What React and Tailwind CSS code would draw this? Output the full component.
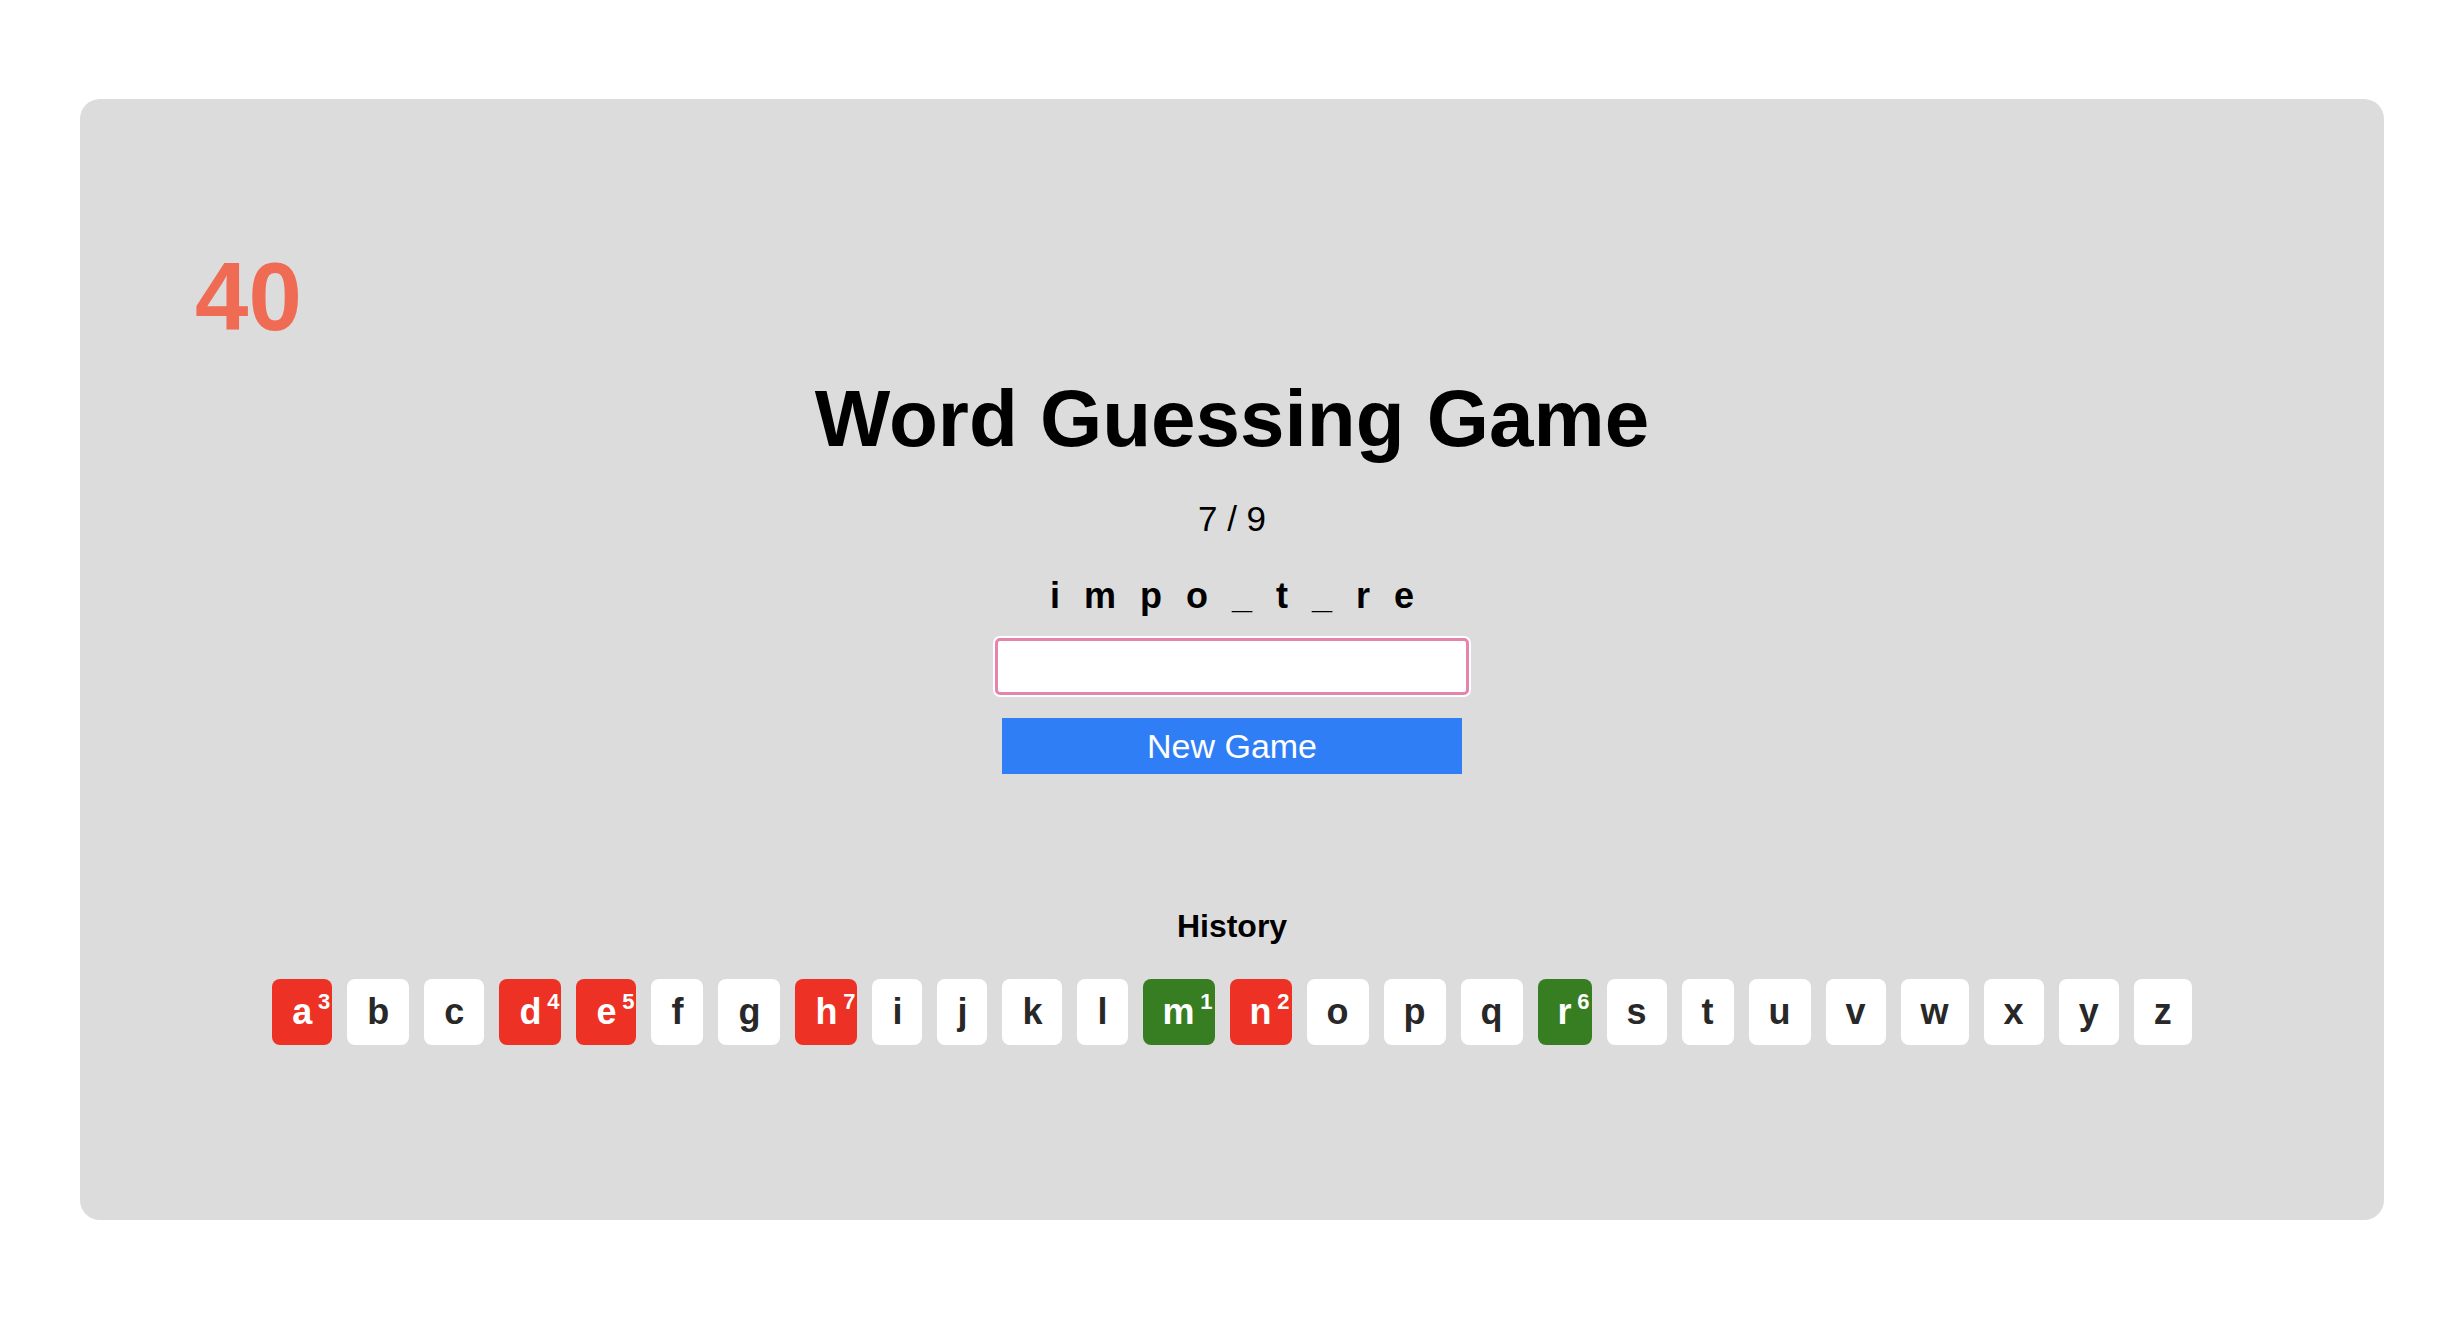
import React from "react";

const WORD = ["i", "m", "p", "o", "_", "t", "_", "r", "e"];

// letter -> [status, order of guess]
const GUESSES = {
  a: ["miss", 3],
  d: ["miss", 4],
  e: ["miss", 5],
  h: ["miss", 7],
  m: ["hit", 1],
  n: ["miss", 2],
  r: ["hit", 6],
};

const ALPHABET = "abcdefghijklmnopqrstuvwxyz".split("");

function LetterTile({ letter }) {
  const guess = GUESSES[letter];
  let tone = "bg-white text-[#282828]";
  if (guess && guess[0] === "miss") tone = "bg-[#ed3124] text-white";
  if (guess && guess[0] === "hit") tone = "bg-[#377e22] text-white";

  return (
    <div className={`relative rounded-lg px-5 py-3 text-[36px] leading-[42px] font-bold ${tone}`}>
      {letter}
      {guess && (
        <span className="absolute top-[12px] right-[2px] text-[22px] leading-none font-bold">
          {guess[1]}
        </span>
      )}
    </div>
  );
}

export default function App() {
  return (
    <div
      className="min-h-screen bg-white pt-[99px]"
      style={{ fontFamily: "'Liberation Sans', Arial, sans-serif" }}
    >
      <div className="ml-[80px] w-[2304px] h-[1121px] rounded-[20px] bg-[#dcdcdc] pt-[150px]">
        {/* Countdown */}
        <div className="pl-[115px] text-[96px] leading-[96px] font-bold text-[#ef6b53]">
          40
        </div>

        <div className="flex flex-col items-center">
          <h1 className="mt-[34px] text-[80px] leading-[80px] font-bold text-black">
            Word Guessing Game
          </h1>

          <p className="mt-[42px] text-[35px] leading-[35px] text-black">7 / 9</p>

          <div className="mt-[42px] flex gap-[24px] text-[36px] leading-[36px] font-bold text-black">
            {WORD.map((ch, i) => (
              <span key={i}>{ch}</span>
            ))}
          </div>

          <input
            type="text"
            className="mt-[24px] w-[474px] h-[57px] rounded-[5px] border-[3px] border-[#e585ad] bg-white ring-2 ring-white outline-none"
          />

          <button className="mt-[23px] w-[460px] h-[56px] bg-[#2f7ef5] text-white text-[34px] leading-none">
            New Game
          </button>

          <h2 className="mt-[136px] text-[32px] leading-[32px] font-bold text-black">History</h2>

          <div className="mt-[37px] flex flex-wrap justify-center gap-[15px]">
            {ALPHABET.map((l) => (
              <LetterTile key={l} letter={l} />
            ))}
          </div>
        </div>
      </div>
    </div>
  );
}
